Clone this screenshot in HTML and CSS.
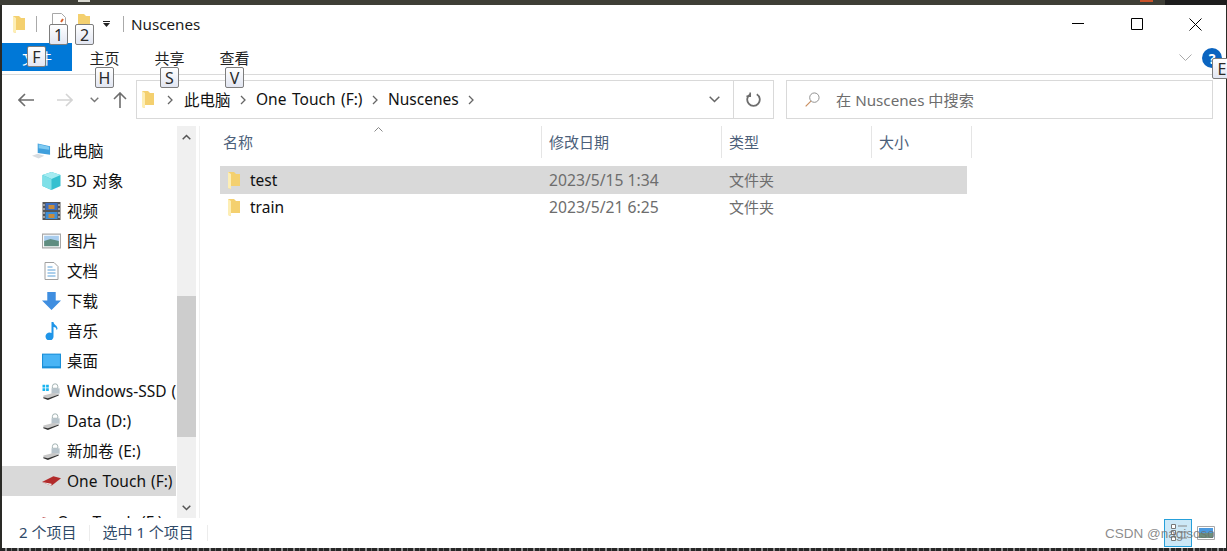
FILE: index.html
```html
<!DOCTYPE html>
<html lang="zh">
<head>
<meta charset="utf-8">
<title>Nuscenes</title>
<link rel="stylesheet" href="styles.css">
</head>
<body>
<div class="win">
  <div class="screen-top"></div>
  <div class="body">
    <header class="title">
      <svg class="ic-folder-big" viewBox="0 0 12 17"><path d="M0 0h6l2 2h4v12H3v3l-3-1z" fill="#f4d06f"/><path d="M0 0l3 2v15l-3-1z" fill="#fdeeb5"/></svg>
      <span class="vsep first"></span>
      <svg class="ic-doc" viewBox="0 0 14 14"><path d="M.5.500h9l4 4v9H.5z" fill="#fff" stroke="#a8a8a8"/><path d="M9 9l2-3" stroke="#d9622b" stroke-width="2"/></svg>
      <svg class="ic-folder-qa" viewBox="0 0 12 12"><path d="M0 0h6l2 2h4v10H0z" fill="#f4d06f"/></svg>
      <svg class="ic-dd" viewBox="0 0 7 6"><path d="M0 0h7v1H0zM0 2h7L3.500 6z" fill="#222"/></svg>
      <span class="vsep second"></span>
      <span class="title-text">Nuscenes</span>
      <div class="win-btns">
        <svg class="b12" viewBox="0 0 12 12"><path d="M0 5.500h12" stroke="#000"/></svg>
        <svg class="b12" viewBox="0 0 12 12"><path d="M.5.500h11v11H.5z" fill="none" stroke="#000"/></svg>
        <svg class="b13" viewBox="0 0 13 13"><path d="M.5.500l12 12M12.500.500l-12 12" stroke="#000"/></svg>
      </div>
    </header>
    <nav class="tabs">
      <span class="tab file">文件</span>
      <span class="tab home">主页</span>
      <span class="tab">共享</span>
      <span class="tab">查看</span>
      <div class="tabs-right">
        <svg class="ic-chev" viewBox="0 0 13 8"><path d="M.5.500l6 6 6-6" fill="none" stroke="#aaa"/></svg>
        <span class="help">?</span>
      </div>
    </nav>
    <div class="addr-row">
      <svg class="nav-ic back" viewBox="0 0 16 14"><path d="M1 7h15M7 1L1 7l6 6" fill="none" stroke="#6d6d6d" stroke-width="1.600"/></svg>
      <svg class="nav-ic fwd" viewBox="0 0 16 14"><path d="M0 7h15M9 1l6 6-6 6" fill="none" stroke="#d4d4d4" stroke-width="1.600"/></svg>
      <svg class="nav-ic down" viewBox="0 0 9 6"><path d="M.7.700l3.800 3.800L8.300.700" fill="none" stroke="#777" stroke-width="1.400"/></svg>
      <svg class="nav-ic up" viewBox="0 0 14 16"><path d="M7 16V1M1 7l6-6 6 6" fill="none" stroke="#6d6d6d" stroke-width="1.600"/></svg>
      <div class="addr">
        <svg class="ic-folder-addr" viewBox="0 0 12 17"><path d="M0 0h6l2 2h4v12H3v3l-3-1z" fill="#f4d06f"/><path d="M0 0l3 2v15l-3-1z" fill="#fdeeb5"/></svg>
        <svg class="crumb" viewBox="0 0 6 10"><path d="M1 1l4 4-4 4" fill="none" stroke="#666" stroke-width="1.300"/></svg>
        <span class="crumb-text">此电脑</span>
        <svg class="crumb" viewBox="0 0 6 10"><path d="M1 1l4 4-4 4" fill="none" stroke="#666" stroke-width="1.300"/></svg>
        <span class="crumb-text">One Touch (F:)</span>
        <svg class="crumb" viewBox="0 0 6 10"><path d="M1 1l4 4-4 4" fill="none" stroke="#666" stroke-width="1.300"/></svg>
        <span class="crumb-text">Nuscenes</span>
        <svg class="crumb" viewBox="0 0 6 10"><path d="M1 1l4 4-4 4" fill="none" stroke="#666" stroke-width="1.300"/></svg>
        <svg class="addr-dd" viewBox="0 0 11 7"><path d="M.7.700l4.800 4.800L10.300.700" fill="none" stroke="#666" stroke-width="1.500"/></svg>
      </div>
      <div class="refresh">
        <svg viewBox="0 0 16 16"><path d="M11.500 2.300A6.700 6.700 0 1 1 4.500 2.300" fill="none" stroke="#6d6d6d" stroke-width="1.900"/><path d="M4.500 0v4H.5" transform="translate(0 .5)" fill="none" stroke="#6d6d6d" stroke-width="1.700"/></svg>
      </div>
      <div class="search">
        <svg viewBox="0 0 16 16"><circle cx="10" cy="6" r="5" fill="none" stroke="#8a8a8a"/><path d="M6.300 9.700L.7 15.300" stroke="#c98d5e" stroke-width="1.200"/></svg>
        <span class="search-text">在 Nuscenes 中搜索</span>
      </div>
    </div>
    <main class="main">
      <aside class="side">
        <ul class="tree">
          <li class="root"><svg viewBox="0 0 20 18"><path d="M6 1l13 3v9L6 11z" fill="#3f9fdc"/><path d="M7 2l11 2.600v3L7 6z" fill="#7fcaf1"/><path d="M0 14l6-2 7 2-6 3z" fill="#d8dce0"/></svg><span class="lbl">此电脑</span></li>
          <li><svg viewBox="0 0 18 18"><path d="M9 0l9 3v11l-9 4-9-4V3z" fill="#35c0d0"/><path d="M9 0l9 3-9 4-9-4z" fill="#a5ecf2"/><path d="M9 7v11l-9-4V3z" fill="#7fe0e8"/></svg><span class="lbl">3D 对象</span></li>
          <li><svg viewBox="0 0 18 18"><path d="M0 0h18v18H0z" fill="#555"/><path d="M3 1h12v7H3z" fill="#3d6fc0"/><path d="M3 10h12v7H3z" fill="#3d8fd8"/><path d="M6 3h6v4H6zM6 12h6v4H6z" fill="#c88c3c"/><path d="M1 2h1v2H1zM1 6h1v2H1zM1 10h1v2H1zM1 14h1v2H1zM16 2h1v2h-1zM16 6h1v2h-1zM16 10h1v2h-1zM16 14h1v2h-1z" fill="#eee"/></svg><span class="lbl">视频</span></li>
          <li><svg viewBox="0 0 18 14"><path d="M.5.500h17v13H.5z" fill="#fff" stroke="#a8a8a8"/><path d="M2 2h14v5H2z" fill="#a9cdee"/><path d="M2 7l6-2 8 2v5H2z" fill="#5f8d80"/></svg><span class="lbl">图片</span></li>
          <li><svg viewBox="0 0 14 18"><path d="M.5.500h9l4 4v13H.5z" fill="#fff" stroke="#a0a0a0"/><path d="M3 5h5M3 8h8M3 11h8M3 14h8" stroke="#5aa0d8"/></svg><span class="lbl">文档</span></li>
          <li><svg viewBox="0 0 18 17"><path d="M5 0h8v8h5l-9 9-9-9h5z" fill="#3f8ee0"/></svg><span class="lbl">下载</span></li>
          <li><svg viewBox="0 0 12 18"><path d="M6 0h2c0 3 4 3 4 7l-1 1c0-2-1-3-3-3v9a4 4 0 1 1-2-3z" fill="#1f95e8"/></svg><span class="lbl">音乐</span></li>
          <li><svg viewBox="0 0 18 14"><path d="M0 0h18v14H0z" fill="#1a8fd8"/><path d="M1 1h16v11H1z" fill="#49b4f5"/></svg><span class="lbl">桌面</span></li>
          <li><svg viewBox="0 0 20 20"><path d="M0 3h3v3H0zM4 3h3v3H4zM0 7h3v3H0zM4 7h3v3H4z" fill="#18b4f0"/><path d="M11 5a3 3 0 0 1 6 0v2h-6z" fill="none" stroke="#9aa"/><path d="M10 7h9v6h-9z" fill="#b8c4cc"/><path d="M1 15l12-3 5 2-12 4H1z" fill="#c8c8c8"/><path d="M1 17l5 1 12-4v1L6 20l-5-2z" fill="#333"/></svg><span class="lbl">Windows-SSD (C:)</span></li>
          <li><svg viewBox="0 0 20 20"><path d="M11 5a3 3 0 0 1 6 0v2h-6z" fill="none" stroke="#9aa"/><path d="M10 7h9v6h-9z" fill="#b8c4cc"/><path d="M1 15l12-3 5 2-12 4H1z" fill="#c8c8c8"/><path d="M1 17l5 1 12-4v1L6 20l-5-2z" fill="#333"/></svg><span class="lbl">Data (D:)</span></li>
          <li><svg viewBox="0 0 20 20"><path d="M11 5a3 3 0 0 1 6 0v2h-6z" fill="none" stroke="#9aa"/><path d="M10 7h9v6h-9z" fill="#b8c4cc"/><path d="M1 15l12-3 5 2-12 4H1z" fill="#c8c8c8"/><path d="M1 17l5 1 12-4v1L6 20l-5-2z" fill="#333"/></svg><span class="lbl">新加卷 (E:)</span></li>
          <li class="sel"><svg viewBox="0 0 20 10"><path d="M0 6l12-6 8 2-10 8z" fill="#b22b2b"/><path d="M0 6l10 2v2z" fill="#e8e8e8"/></svg><span class="lbl">One Touch (F:)</span></li>
          <li class="root last"><svg viewBox="0 0 20 10"><path d="M0 6l12-6 8 2-10 8z" fill="#b22b2b"/></svg><span class="lbl">One Touch (F:)</span></li>
        </ul>
      </aside>
      <div class="scroll">
        <svg class="sb-arrow up" viewBox="0 0 9 6"><path d="M.7 5.300L4.500 1.500l3.800 3.800" fill="none" stroke="#555" stroke-width="1.500"/></svg>
        <div class="sb-track"><div class="sb-thumb"></div></div>
        <svg class="sb-arrow" viewBox="0 0 9 6"><path d="M.7.700l3.800 3.800L8.300.700" fill="none" stroke="#555" stroke-width="1.500"/></svg>
      </div>
      <section class="list">
        <svg class="sort" viewBox="0 0 9 5"><path d="M.5 4.500l4-4 4 4" fill="none" stroke="#888"/></svg>
        <div class="heads">
          <span class="h name">名称</span>
          <span class="h date">修改日期</span>
          <span class="h type">类型</span>
          <span class="h size">大小</span>
        </div>
        <div class="row sel">
          <span class="c name"><svg viewBox="0 0 12 17"><path d="M0 0h6l2 2h4v12H3v3l-3-1z" fill="#f4d06f"/><path d="M0 0l3 2v15l-3-1z" fill="#fdeeb5"/></svg>test</span>
          <span class="c date">2023/5/15 1:34</span>
          <span class="c type">文件夹</span>
        </div>
        <div class="row">
          <span class="c name"><svg viewBox="0 0 12 17"><path d="M0 0h6l2 2h4v12H3v3l-3-1z" fill="#f4d06f"/><path d="M0 0l3 2v15l-3-1z" fill="#fdeeb5"/></svg>train</span>
          <span class="c date">2023/5/21 6:25</span>
          <span class="c type">文件夹</span>
        </div>
      </section>
    </main>
    <footer class="status">
      <span class="count">2 个项目</span>
      <span class="st-sep"></span>
      <span class="selected">选中 1 个项目</span>
      <span class="st-sep"></span>
      <div class="views">
        <span class="view on"><svg viewBox="0 0 17 20"><path d="M1.500 1.500h4v4h-4zM1.500 7.500h4v4h-4zM1.500 13.500h4v4h-4z" fill="#fff" stroke="#777"/><path d="M8 3h9M8 9h9M8 15h9" stroke="#888"/></svg></span>
        <span class="view"><svg viewBox="0 0 18 14"><path d="M.5.500h17v13H.5z" fill="#fff" stroke="#a8a8a8"/><path d="M2 2h14v5H2z" fill="#4b9ae0"/><path d="M2 7h14v5H2z" fill="#6c8f7c"/></svg></span>
      </div>
    </footer>
  </div>
  <div class="screen-bottom"></div>
  <span class="tip t1">1</span>
  <span class="tip t2">2</span>
  <span class="tip tf">F</span>
  <span class="tip th">H</span>
  <span class="tip ts">S</span>
  <span class="tip tv">V</span>
  <span class="tip te">E</span>
  <span class="mark">CSDN @nagisoso</span>
</div>
</body>
</html>
```
FILE: styles.css
```css
* { box-sizing: border-box; }
html, body { margin: 0; padding: 0; }
body {
  width: 1227px;
  height: 551px;
  overflow: hidden;
  font-family: "Noto Sans", "Noto Sans CJK SC", sans-serif;
  font-size: 15.5px;
  color: #111;
  background: #2a2a26;
}
svg { display: block; flex: none; }
.win { position: relative; width: 1227px; height: 551px; display: flex; flex-direction: column; overflow: hidden; }
.screen-top {
  height: 5px;
  flex: none;
  background:
    linear-gradient(90deg, transparent 78px, #d8d8d0 78px, #d8d8d0 90px, transparent 90px, transparent 1140px, #c9532a 1140px, #c9532a 1153px, transparent 1153px),
    linear-gradient(90deg, #3e3e36 0, #3e3e36 1165px, #1d1d1d 1165px);
  background-size: 100% 2px, 100% 100%;
  background-repeat: no-repeat;
}
.screen-bottom {
  height: 3px;
  flex: none;
  background: repeating-linear-gradient(90deg, #262626 0, #262626 5px, #8d8d8d 5px, #8d8d8d 7px, #262626 7px, #262626 11px, #666 11px, #666 12px);
}
.body { flex: 1; min-height: 0; margin: 0 1px 0 2px; background: #fff; display: flex; flex-direction: column; }

.title { height: 38px; flex: none; display: flex; align-items: center; }
.ic-folder-big { width: 12px; height: 17px; margin-left: 11px; }
.vsep { width: 1px; height: 16px; background: #aaa; }
.vsep.first { margin-left: 11px; }
.ic-doc { width: 14px; height: 14px; margin-left: 15px; margin-top: -8px; }
.ic-folder-qa { width: 12px; height: 12px; margin-left: 12px; margin-top: -9px; }
.ic-dd { width: 7px; height: 6px; margin-left: 13px; }
.vsep.second { margin-left: 13px; }
.title-text { margin-left: 7px; font-size: 15.2px; color: #1a1a1a; }
.win-btns { margin-left: auto; margin-right: 24px; display: flex; align-items: center; gap: 46.5px; }
.b12 { width: 12px; height: 12px; }
.b13 { width: 13px; height: 13px; }

.tabs { height: 32px; flex: none; display: flex; border-bottom: 1px solid #dadada; align-items: flex-start; }
.tab { width: 65px; height: 28px; display: flex; align-items: center; justify-content: center; font-size: 15px; color: #222; }
.tab.file { width: 70px; background: #0078d7; color: #fff; }
.tabs-right { margin-left: auto; display: flex; align-items: center; gap: 10px; margin-top: 5px; margin-right: 4px; }
.ic-chev { width: 13px; height: 8px; }
.help { width: 20px; height: 20px; border-radius: 50%; background: #0a64c0; color: #fff; font-weight: 700; font-size: 14px; display: flex; align-items: center; justify-content: center; }

.addr-row { height: 44px; flex: none; display: flex; align-items: center; padding-top: 5px; }
.nav-ic.back { width: 16px; height: 14px; margin-left: 16px; }
.nav-ic.fwd { width: 16px; height: 14px; margin-left: 23px; }
.nav-ic.down { width: 9px; height: 6px; margin-left: 17px; }
.nav-ic.up { width: 14px; height: 16px; margin-left: 14px; }
.addr { width: 598px; height: 39px; margin-left: 9px; border: 1px solid #d9d9d9; display: flex; align-items: center; }
.crumb-text { margin-top: -1px; word-spacing: 1.5px; }
.ic-folder-addr { width: 12px; height: 17px; margin-left: 5px; }
.crumb { width: 6px; height: 10px; margin: 0 10px 0 9.5px; }
.ic-folder-addr + .crumb { margin: 0 11px 0 13px; }
.addr-dd { width: 11px; height: 7px; margin-left: auto; margin-right: 13px; }
.refresh { width: 40px; height: 39px; border: 1px solid #d9d9d9; border-left: 0; display: flex; align-items: center; justify-content: center; }
.refresh svg { width: 15px; height: 15px; }
.search { width: 427px; height: 39px; margin-left: 12px; border: 1px solid #d9d9d9; display: flex; align-items: center; color: #6d6d6d; padding-left: 18px; gap: 16px; }
.search svg { width: 15px; height: 15px; }
.search-text { font-size: 15.2px; margin-top: -2px; }

.main { flex: 1; min-height: 0; display: flex; padding-top: 7px; overflow: hidden; }
.side { width: 175px; flex: none; overflow: hidden; }
.tree { list-style: none; margin: 0; padding: 10px 0 0; }
.tree li { height: 30px; margin-right: 1px; display: flex; align-items: center; padding-left: 40px; gap: 6px; white-space: nowrap; overflow: hidden; }
.tree li svg { width: 19px; height: 18px; }
.lbl { margin-top: -1px; word-spacing: 1px; }
.tree li.root { padding-left: 30px; }
.tree li.sel { background: #d9d9d9; }
.tree li.last { margin-top: 11px; }
.scroll { width: 19px; flex: none; background: #f0f0f0; display: flex; flex-direction: column; align-items: center; }
.sb-arrow { width: 9px; height: 6px; margin: 7px 0; }
.sb-arrow.up { margin: 8px 0 6px; }
.sb-track { flex: 1; width: 100%; padding-top: 150px; padding-bottom: 61px; display: flex; }
.sb-thumb { flex: 1; background: #cdcdcd; }

.list { flex: 1; position: relative; margin-left: 3px; border-left: 1px solid #f0f0f0; padding-left: 20px; min-width: 0; }
.sort { position: absolute; left: 174px; top: 1px; width: 9px; height: 5px; }
.heads { display: flex; height: 32px; width: 752px; }
.h { display: flex; align-items: center; padding: 0 0 2px 7px; border-right: 1px solid #e5e5e5; color: #4c607a; font-size: 15px; }
.h.name { width: 322px; padding-left: 3px; }
.h.date { width: 180px; }
.h.type { width: 150px; }
.h.size { width: 100px; }
.row { display: flex; height: 27px; width: 747px; }
.row.sel { background: #d9d9d9; margin-top: 8px; height: 28px; }
.c { display: flex; align-items: center; }
.c.name { width: 329px; padding-left: 8px; gap: 10px; color: #111; }
.c.name svg { width: 12px; height: 17px; }
.c.date { width: 180px; color: #6d6d6d; font-size: 15.7px; }
.c.type { width: 150px; color: #6d6d6d; font-size: 15px; padding-bottom: 2px; }
.row + .row .c { padding-bottom: 1px; }
.row + .row .c.type { padding-bottom: 2px; }

.status { height: 30px; flex: none; display: flex; align-items: center; color: #2f4a68; font-size: 15px; padding-left: 17px; }
.count, .selected { margin-top: -4px; }
.st-sep { width: 1px; height: 16px; background: #ececec; margin: 0 12px 0 13px; }
.views { margin-left: auto; margin-right: 11px; display: flex; align-items: center; gap: 5px; }
.view { display: flex; align-items: center; justify-content: center; }
.view.on { width: 28px; height: 28px; background: #cce8f7; border: 1px solid #26a0da; }
.view.on svg { width: 17px; height: 20px; }
.view svg { width: 18px; height: 14px; }

.tip { position: absolute; width: 19px; height: 21px; display: flex; align-items: center; justify-content: center; border: 1px solid #7d7d7d; border-radius: 2px; background: linear-gradient(#fff, #e2e6f2); color: #2a2a2a; font-size: 16px; }
.t1 { left: 49px; top: 24px; }
.t2 { left: 75px; top: 24px; }
.tf { left: 27px; top: 46px; }
.th { left: 95px; top: 67px; }
.ts { left: 160px; top: 67px; }
.tv { left: 225px; top: 67px; }
.te { left: 1212px; top: 58px; width: 20px; }
.mark { position: absolute; left: 1105px; top: 526px; font-family: "Liberation Sans", sans-serif; font-size: 13.5px; color: rgba(110,110,110,.8); white-space: nowrap; }
```
